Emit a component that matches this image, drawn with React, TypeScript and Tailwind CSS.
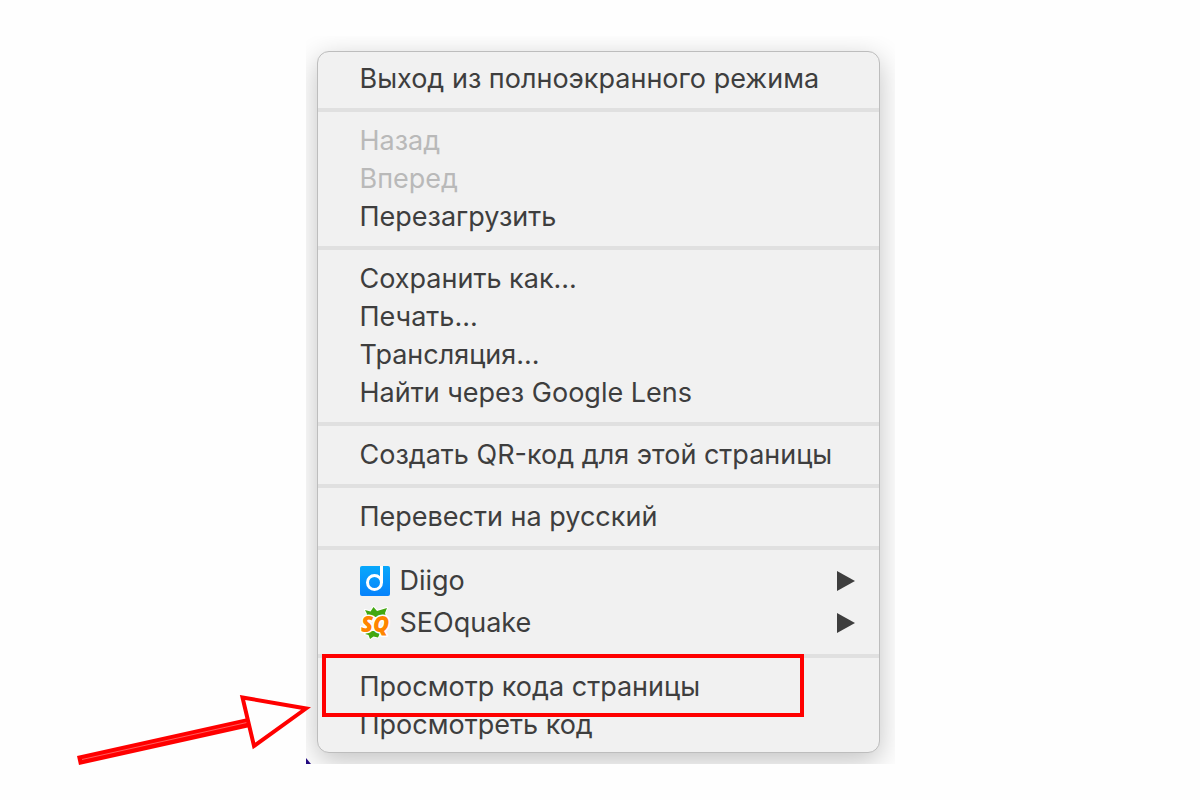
import React from "react";

interface MenuItem {
  label: string;
  disabled?: boolean;
  icon?: React.ReactNode;
  submenu?: boolean;
  highlighted?: boolean;
}

function DiigoIcon() {
  return (
    <svg viewBox="0 0 30 30" className="h-[30px] w-[30px] shrink-0" aria-hidden="true">
      <defs>
        <linearGradient id="diigo" x1="0" y1="0" x2="0" y2="1">
          <stop offset="0" stopColor="#08a8fb" />
          <stop offset="1" stopColor="#0782fb" />
        </linearGradient>
      </defs>
      <rect width="30" height="30" rx="2" fill="url(#diigo)" />
      <circle cx="14.5" cy="16.5" r="7" fill="none" stroke="#fff" strokeWidth="3" />
      <path d="M21.5 0V17" stroke="#fff" strokeWidth="3" />
    </svg>
  );
}

function SeoquakeIcon() {
  return (
    <svg viewBox="0 0 32 34" className="-mr-0.5 h-[34px] w-8 shrink-0" aria-hidden="true">
      <g fill="#43a811" stroke="#fff" strokeWidth="2" strokeLinejoin="round" paintOrder="stroke">
        <path d="M5 4l5.5 1.500L13.500 1l3.500 4 10-3-2 5 1 4H6l1-3z" />
        <path d="M8 25h13l-3 6.500-4.500-1-3.500 2.500-1.500-4-3.500-1z" />
      </g>
      <text
        x="1"
        y="26"
        fontSize="22"
        fontWeight="900"
        fontStyle="italic"
        fill="#ff8500"
        stroke="#fff"
        strokeWidth="3"
        strokeLinejoin="round"
        paintOrder="stroke"
        className="font-['Open_Sans','Inter',sans-serif]"
      >
        SQ
      </text>
    </svg>
  );
}

const sections: MenuItem[][] = [
  [{ label: "Выход из полноэкранного режима" }],
  [
    { label: "Назад", disabled: true },
    { label: "Вперед", disabled: true },
    { label: "Перезагрузить" },
  ],
  [
    { label: "Сохранить как..." },
    { label: "Печать..." },
    { label: "Трансляция..." },
    { label: "Найти через Google Lens" },
  ],
  [{ label: "Создать QR-код для этой страницы" }],
  [{ label: "Перевести на русский" }],
  [
    { label: "Diigo", icon: <DiigoIcon />, submenu: true },
    { label: "SEOquake", icon: <SeoquakeIcon />, submenu: true },
  ],
  [
    { label: "Просмотр кода страницы", highlighted: true },
    { label: "Просмотреть код" },
  ],
];

function MenuRow({ label, disabled, icon, submenu, highlighted }: MenuItem) {
  return (
    <li role="none" className="relative">
      <button
        type="button"
        role="menuitem"
        disabled={disabled}
        aria-haspopup={submenu ? "menu" : undefined}
        className={`flex w-full items-center gap-[10px] pr-6 pl-[42px] text-left text-[27px] whitespace-nowrap text-[#3e3e3e] disabled:text-[#b9b9b9] ${
          submenu ? "h-[42px]" : "h-[38px]"
        }`}
      >
        {icon}
        <span>{label}</span>
        {submenu && (
          <svg viewBox="0 0 18 20" className="ml-auto h-5 w-[18px]" aria-hidden="true">
            <path d="M0 0l18 10L0 20z" fill="#3e3e3e" />
          </svg>
        )}
      </button>
      {highlighted && (
        <div className="pointer-events-none absolute -top-[14px] right-[75px] left-1 z-10 h-[63px] border-4 border-[#ff0000]" />
      )}
    </li>
  );
}

function PointerArrow() {
  return (
    <svg
      viewBox="76 690 240 80"
      className="pointer-events-none absolute top-[654px] -left-[230px] h-20 w-60"
      aria-hidden="true"
    >
      <path d="M77 756L248 718L250 727L79 765z" fill="#ff0000" />
      <path d="M82 759.5L249 722" stroke="#ff9a9a" strokeWidth="0.6" />
      <path
        d="M242.5 697.5L306 708.5L254 746z"
        fill="#fefefe"
        stroke="#ff0000"
        strokeWidth="4"
        strokeMiterlimit="10"
      />
    </svg>
  );
}

export default function App() {
  return (
    <main className="flex min-h-screen items-start justify-center bg-[#fefefe] pt-9 font-['Inter','Noto_Sans',sans-serif]">
      <div className="relative w-full max-w-[589px]">
        <div className="relative overflow-hidden pt-[15px] pr-[15px] pb-[11px] pl-[11px]">
          <div
            role="menu"
            className="rounded-xl border border-[#bdbdbd] bg-[#f1f1f1] py-2 shadow-[0_8px_28px_rgba(0,0,0,0.24)]"
          >
            {sections.map((items, index) => (
              <React.Fragment key={index}>
                {index > 0 && <hr className="my-[10px] border-0 border-t-4 border-[#e0e0e0]" />}
                <ul role="none">
                  {items.map((item) => (
                    <MenuRow key={item.label} {...item} />
                  ))}
                </ul>
              </React.Fragment>
            ))}
          </div>
          {/* Corner of the window behind the menu */}
          <svg viewBox="0 0 5 6" className="absolute bottom-0 left-0 h-1.5 w-[5px]" aria-hidden="true">
            <path d="M0 0l5 6H0z" fill="#230a80" />
          </svg>
        </div>
        <PointerArrow />
      </div>
    </main>
  );
}
